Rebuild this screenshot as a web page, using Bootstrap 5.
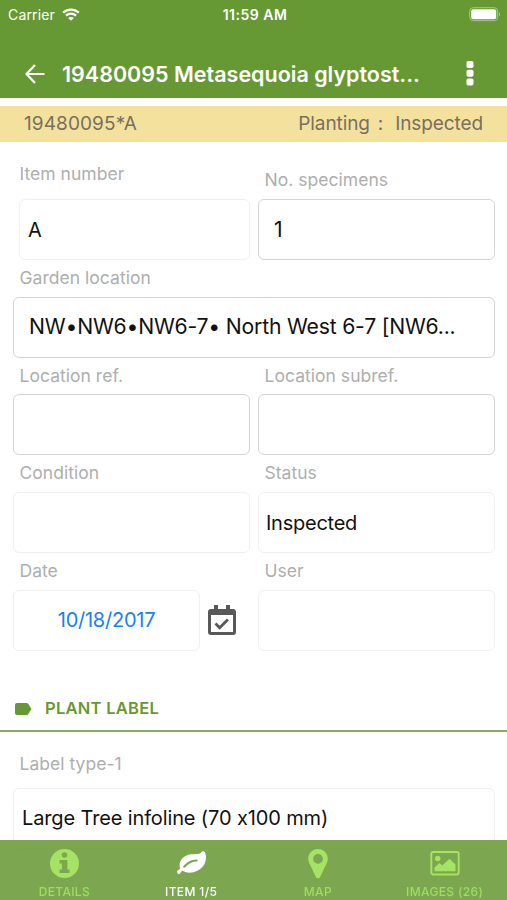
<!DOCTYPE html>
<html lang="en">
<head>
<meta charset="utf-8">
<meta name="viewport" content="width=device-width, initial-scale=1">
<title>Plant item</title>
<link href="https://cdn.jsdelivr.net/npm/bootstrap@5.3.0/dist/css/bootstrap.min.css" rel="stylesheet">
<style>
  body { font-family: Inter, "Liberation Sans", sans-serif; background: #fff; color: #111; height: 900px; overflow: hidden; }
  svg { display: block; flex: none; }
  .top { background: #669933; color: #fff; height: 98px; }
  .status { height: 28px; display: grid; grid-template-columns: 1fr auto 1fr; padding: 0 6px 0 8px; }
  .carrier { font-size: 14px; letter-spacing: .15px; gap: 7px; }
  .clock { font-size: 14px; font-weight: 600; letter-spacing: .6px; }
  .clock { letter-spacing: .5px; padding-left: 1px; }
  .titlebar { height: 70px; padding: 22px 33px 0 24px; }
  .title-text { font-size: 21.5px; font-weight: 600; letter-spacing: 0; line-height: 50px; }
  .band { margin-top: 8px; height: 36px; background: #f5e19e; color: #77705f; font-size: 19px; padding: 0 24px; letter-spacing: -.1px; }
  .code { letter-spacing: .1px; }
  .form { padding: 20.4px 12px 0 13px; }
  .cols { display: grid; grid-template-columns: 237px 237px; column-gap: 8px; }
  .lab { height: 36.7px; line-height: 35px; padding-left: 6.5px; font-size: 17.5px; letter-spacing: .03px; color: #aeaeae; white-space: nowrap; }
  .lab-up { line-height: 23px; }
  .box { height: 61px; border: 1.5px solid #f0f0f0; border-radius: 6px; font-size: 20px; letter-spacing: -.25px; padding: 0 7px; color: #111; white-space: nowrap; }
  .box-on { border-color: #d4d4d4; font-size: 21.2px; letter-spacing: -.21px; padding-left: 15px; }
  .box-inset { margin-left: 6px; padding-left: 8px; }
  .date { width: 187px; color: #1b80f0; }
  .cal { margin-left: 8px; }
  .section { height: 81px; padding: 37px 0 0 15px; border-bottom: 2px solid #84ae5b; color: #669933; font-size: 16.5px; font-weight: 600; letter-spacing: .27px; gap: 13px; }
  .label-form { padding: 14px 12px 0 13px; }
  .label-form .lab { height: 42px; }
  .label-form .box { letter-spacing: -.13px; padding-left: 8px; }
  .tabs { height: 60px; background: rgba(102,153,51,.86); color: #9fdc62; display: grid; grid-template-columns: repeat(4, 1fr); }
  .tab-item { font-size: 12px; line-height: 14px; font-weight: 500; padding-top: 7px; padding-left: 2px; letter-spacing: .35px; }
  .tab-item svg { margin-bottom: 6px; }
</style>
<script src="https://cdn.jsdelivr.net/npm/bootstrap@5.3.0/dist/js/bootstrap.bundle.min.js"></script>
</head>
<body>
<header class="top">
  <div class="status align-items-center">
    <div class="d-flex align-items-center carrier">Carrier
      <svg width="18" height="13" viewBox="0 0 18 13" fill="none" stroke="#fff" stroke-width="2.3"><path d="M1.2 4.6C5.5.5 12.5.5 16.8 4.6M4 7.6c2.8-2.6 7.2-2.6 10 0"/><path d="M9 12.8 6.200 10c1.600-1.400 4-1.400 5.600 0z" fill="#fff" stroke="none"/></svg>
    </div>
    <div class="clock">11:59 AM</div>
    <svg class="ms-auto" width="32" height="15" viewBox="0 0 32 15"><rect x=".7" y=".7" width="28" height="13" rx="3.5" fill="none" stroke="#a9c58a"/><rect x="2.200" y="2.200" width="25" height="10" rx="2" fill="#fff"/><path d="M30 5.200c1.500.8 1.500 3.200 0 4z" fill="#a9c58a"/></svg>
  </div>
  <div class="titlebar d-flex align-items-center">
    <svg width="22" height="20" viewBox="0 0 22 20" fill="none" stroke="#fff" stroke-width="2.2"><path d="M20.500 10H3M11 1 2.500 10l8.500 9"/></svg>
    <div class="title-text ms-3">19480095 Metasequoia glyptost...</div>
    <svg class="ms-auto" width="8" height="26" viewBox="0 0 8 26" fill="#fff"><rect x=".5" y="0" width="7" height="7" rx="1.8"/><rect x=".5" y="8.800" width="7" height="7" rx="1.8"/><rect x=".5" y="17.500" width="7" height="7" rx="1.8"/></svg>
  </div>
</header>
<div class="band d-flex align-items-center justify-content-between">
  <span class="code">19480095*A</span>
  <span class="d-flex"><span>Planting</span><span class="mx-2">:</span><span class="ms-1">Inspected</span></span>
</div>
<main class="form">
  <div class="cols">
    <div><div class="lab lab-up">Item number</div><div class="box box-inset d-flex align-items-center">A</div></div>
    <div><div class="lab">No. specimens</div><div class="box box-on d-flex align-items-center">1</div></div>
  </div>
  <div class="lab">Garden location</div>
  <div class="box box-on d-flex align-items-center">NW•NW6•NW6-7• North West 6-7 [NW6...</div>
  <div class="cols">
    <div><div class="lab">Location ref.</div><div class="box box-on"></div></div>
    <div><div class="lab">Location subref.</div><div class="box box-on"></div></div>
    <div><div class="lab">Condition</div><div class="box"></div></div>
    <div><div class="lab">Status</div><div class="box d-flex align-items-center">Inspected</div></div>
    <div><div class="lab">Date</div>
      <div class="d-flex align-items-center">
        <div class="box date d-flex align-items-center justify-content-center">10/18/2017</div>
        <svg class="cal" width="28" height="32" viewBox="0 0 28 32"><path fill="#585858" fill-rule="evenodd" d="M6 1h4v4h8V1h4v4h3q3 0 3 3v20q0 3-3 3H3q-3 0-3-3V8q0-3 3-3h3zM3 11v17h22V11z"/><path d="m7.500 19.500 4.200 4.200 8.200-8.200" fill="none" stroke="#585858" stroke-width="2.800"/></svg>
      </div></div>
    <div><div class="lab">User</div><div class="box"></div></div>
  </div>
</main>
<div class="section d-flex align-items-center">
  <svg width="17" height="12" viewBox="0 0 17 12"><path fill="#669933" d="M2 0h9.500q1 0 1.800.9L16.500 6l-3.200 5.100q-.8.900-1.800.9H2q-2 0-2-2V2q0-2 2-2z"/></svg>
  <span>PLANT LABEL</span>
</div>
<div class="label-form">
  <div class="lab">Label type-1</div>
  <div class="box d-flex align-items-center">Large Tree infoline (70 x100 mm)</div>
</div>
<nav class="tabs fixed-bottom">
  <div class="tab-item d-flex flex-column align-items-center"><svg width="31" height="32" viewBox="0 0 31 32"><circle cx="15.500" cy="16.500" r="14.500" fill="#a6e264"/><circle cx="15.500" cy="8" r="2.800" fill="#7ba750"/><path fill="#7ba750" d="M10.500 13h7.800v9.500h2.200V26h-10v-3.500h2.400v-6h-2.400z"/></svg>DETAILS</div>
  <div class="tab-item d-flex flex-column align-items-center text-white"><svg width="29" height="32" viewBox="0 -100 1792 1912" fill="#fff"><path d="M1280 704q0-26-19-45t-45-19q-172 0-318 49.500t-259.500 134-235.500 219.500q-19 21-19 45 0 26 19 45t45 19q24 0 45-19 27-24 74-71t67-66q137-124 268.500-176t313.500-52q26 0 45-19t19-45zm512-198q0 95-20 193-46 224-184.500 383t-357.500 268q-214 108-438 108-148 0-286-47-15-5-88-42t-96-37q-16 0-39.500 32t-45 70-52.500 70-60 32q-43 0-63.500-17.500t-45.500-59.500q-2-4-6-11t-5.500-10-3-9.500-1.500-13.500q0-35 31-73.500t68-65.500 68-56 31-48q0-4-14-38t-16-44q-9-51-9-104 0-115 43.500-220t119-184.500 170.500-139 204-95.500q55-18 145-25.500t179.500-9 178.500-6 163.500-24 113.500-56.500l29.500-29.500 29.500-28 27-20 36.500-16 43.500-4.500q39 0 70.500 46t47.500 112 24 124 8 96z"/></svg>ITEM 1/5</div>
  <div class="tab-item d-flex flex-column align-items-center"><svg width="20" height="32" viewBox="0 0 20 32"><path fill="#a6e264" fill-rule="evenodd" d="M10 2c5.500 0 9.800 4.300 9.800 9.800 0 1.500-.3 2.800-.9 4L12 30.200c-.8 1.500-3.200 1.500-4 0L1.100 15.800c-.6-1.200-.9-2.500-.9-4C.2 6.300 4.500 2 10 2zm0 5a4.900 4.900 0 1 0 0 9.800A4.900 4.900 0 0 0 10 7z"/></svg>MAP</div>
  <div class="tab-item d-flex flex-column align-items-center"><svg width="30" height="32" viewBox="0 0 30 32" fill="#a6e264"><rect x="1.300" y="5" width="27.400" height="22.500" rx="2" fill="none" stroke="#a6e264" stroke-width="1.9"/><circle cx="7.700" cy="11.500" r="2.700"/><path d="M4.500 24.300V20.500l5-4.500 2.700 2.500 7.300-6.800 6 5.800v6.800z"/></svg>IMAGES (26)</div>
</nav>
</body>
</html>
